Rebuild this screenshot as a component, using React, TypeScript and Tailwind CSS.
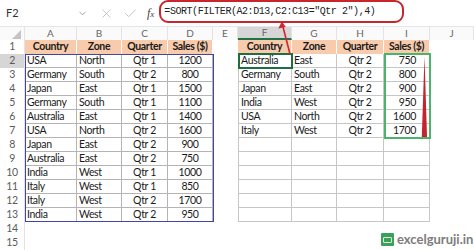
import { ChevronDown, X, Check } from 'lucide-react';

const colWidths = [25, 52, 45, 46, 45, 25, 54, 45, 47, 46, 44];
const colLetters = ['', 'A', 'B', 'C', 'D', 'E', 'F', 'G', 'H', 'I', 'J'];

const headers = ['Country', 'Zone', 'Quarter', 'Sales ($)'];

const source = [
  ['USA', 'North', 'Qtr 1', '1200'],
  ['Germany', 'South', 'Qtr 2', '800'],
  ['Japan', 'East', 'Qtr 1', '1500'],
  ['Germany', 'South', 'Qtr 1', '1100'],
  ['Australia', 'East', 'Qtr 1', '1400'],
  ['USA', 'North', 'Qtr 2', '1600'],
  ['Japan', 'East', 'Qtr 2', '900'],
  ['Australia', 'East', 'Qtr 2', '750'],
  ['India', 'West', 'Qtr 1', '1000'],
  ['Italy', 'West', 'Qtr 1', '850'],
  ['Italy', 'West', 'Qtr 2', '1700'],
  ['India', 'West', 'Qtr 2', '950'],
];

const result = [
  ['Australia', 'East', 'Qtr 2', '750'],
  ['Germany', 'South', 'Qtr 2', '800'],
  ['Japan', 'East', 'Qtr 2', '900'],
  ['India', 'West', 'Qtr 2', '950'],
  ['USA', 'North', 'Qtr 2', '1600'],
  ['Italy', 'West', 'Qtr 2', '1700'],
];

const leftAlign = ['justify-start pl-[2px]', 'justify-start pl-[2px]', 'justify-center', 'justify-center'];
const rightAlign = ['justify-start pl-[2px]', 'justify-start pl-[2px]', 'justify-center', 'justify-end pr-[13px]'];

const rowNums = [1, 2, 3, 4, 5, 6, 7, 8, 9, 10, 11, 12, 13, 14, 15];

function Cell({ w, className = '', children }: { w: number; className?: string; children?: React.ReactNode }) {
  return (
    <div className={`h-[14px] flex items-center shrink-0 whitespace-nowrap overflow-hidden ${className}`} style={{ width: w }}>
      {children}
    </div>
  );
}

function Row({ n }: { n: number }) {
  const isHead = n === 1;
  const inTable = n <= 13;
  const left = isHead ? headers : inTable ? source[n - 2] : ['', '', '', ''];
  const right = isHead ? headers : n <= 7 ? result[n - 2] : ['', '', '', ''];
  const headCls = 'bg-[#f8cbad] border-r border-white font-bold justify-center';

  return (
    <div className="flex h-[14px]">
      <Cell w={colWidths[0]} className={`justify-center text-[#5b5b5b] border-r border-[#e3e3e3] ${n === 2 ? 'bg-[#d6d6d6]' : ''}`}>
        {n}
      </Cell>
      {left.map((v, i) => (
        <Cell
          key={`l${i}`}
          w={colWidths[i + 1]}
          className={isHead ? headCls : inTable ? `border-r border-b border-[#b4b4b4] ${leftAlign[i]}` : ''}
        >
          {v}
        </Cell>
      ))}
      <Cell w={colWidths[5]} />
      {right.map((v, i) => (
        <Cell
          key={`r${i}`}
          w={colWidths[i + 6]}
          className={
            isHead
              ? headCls
              : inTable
                ? `border-r border-b border-[#c6c6c6] ${i === 0 ? 'border-l' : ''} ${rightAlign[i]}`
                : ''
          }
        >
          {v}
        </Cell>
      ))}
      <Cell w={colWidths[10]} />
    </div>
  );
}

export default function App() {
  return (
    <div className="relative w-[474px] h-[250px] overflow-hidden bg-white text-[10.5px] text-[#1a1a1a] font-['Lato',sans-serif] tracking-[-0.35px]">
      {/* formula bar */}
      <div className="h-[27px] flex items-center border-b border-[#e6e6e6] tracking-normal">
        <div className="w-[96px] h-full flex items-center justify-between pl-[6px] pr-[8px] text-[11px] text-[#333]">
          <span>F2</span>
          <ChevronDown className="w-[11px] h-[11px] text-[#777]" strokeWidth={1.5} />
        </div>
        <div className="flex items-center gap-[9px] pl-[3px] text-[#b3b3b3]">
          <X className="w-[15px] h-[15px]" strokeWidth={1.2} />
          <Check className="w-[15px] h-[15px]" strokeWidth={1.2} />
        </div>
        <span className="ml-[9px] italic font-['Liberation_Serif',serif] text-[12px] text-[#444]">
          f<span className="text-[9px]">x</span>
        </span>
        <div className="ml-[5px] h-[23px] w-[245px] mt-[-3px] border-2 border-[#c8262c] rounded-[9px] flex items-center pl-[3px] font-['Liberation_Mono',monospace] text-[10px] tracking-[-0.45px] text-[#222]">
          =SORT(FILTER(A2:D13,C2:C13="Qtr 2"),4)
        </div>
      </div>

      {/* column letters */}
      <div className="flex h-[13px] text-[10px] text-[#666] bg-[#fafafa] tracking-normal">
        {colWidths.map((w, i) => (
          <div
            key={i}
            className={`h-[13px] flex items-center justify-center shrink-0 border-r border-[#e3e3e3] ${i === 6 ? 'bg-[#d6d6d6] border-b-2 border-b-[#217346]' : ''}`}
            style={{ width: w }}
          >
            {i === 0 ? (
              <svg width="9" height="9" viewBox="0 0 9 9" className="ml-[8px] mt-[1px]">
                <polygon points="9,0 9,9 0,9" fill="#c4c4c4" />
              </svg>
            ) : (
              colLetters[i]
            )}
          </div>
        ))}
      </div>

      {/* rows */}
      <div className="flex flex-col">
        {rowNums.map((n) => (
          <Row key={n} n={n} />
        ))}
      </div>

      {/* source range border */}
      <div className="absolute left-[25px] top-[54px] w-[189px] h-[168px] border-[1.5px] border-[#4146a0]" />
      {/* active cell F2 */}
      <div className="absolute left-[238px] top-[53px] w-[55px] h-[16px] border-2 border-[#1f6e43]" />
      {/* highlighted sales */}
      <div className="absolute left-[384px] top-[53px] w-[47px] h-[86px] border-2 border-[#4cb46a]" />

      <svg className="absolute left-0 top-0 pointer-events-none" width="474" height="250">
        <polygon points="424.5,56 421.8,137 427,137" fill="#c3242d" />
        <line x1="290" y1="54" x2="282.5" y2="25" stroke="#d0262d" strokeWidth="1.6" />
        <polygon points="281.8,21.5 278.3,28.5 285.8,27" fill="#d0262d" />
      </svg>

      {/* watermark */}
      <div className="absolute left-[381px] top-[233px] flex items-center gap-[3px] tracking-normal">
        <div className="w-[13px] h-[13px] bg-[#3aa05a] rounded-[1px] flex items-center justify-center">
          <div className="w-[9px] h-[6px] border border-white/80 rounded-[1px]" />
        </div>
        <span className="font-['Lato',sans-serif] font-bold text-[13px] text-[#7d7d7d] leading-none">
          excelguruji.in
        </span>
      </div>
    </div>
  );
}
